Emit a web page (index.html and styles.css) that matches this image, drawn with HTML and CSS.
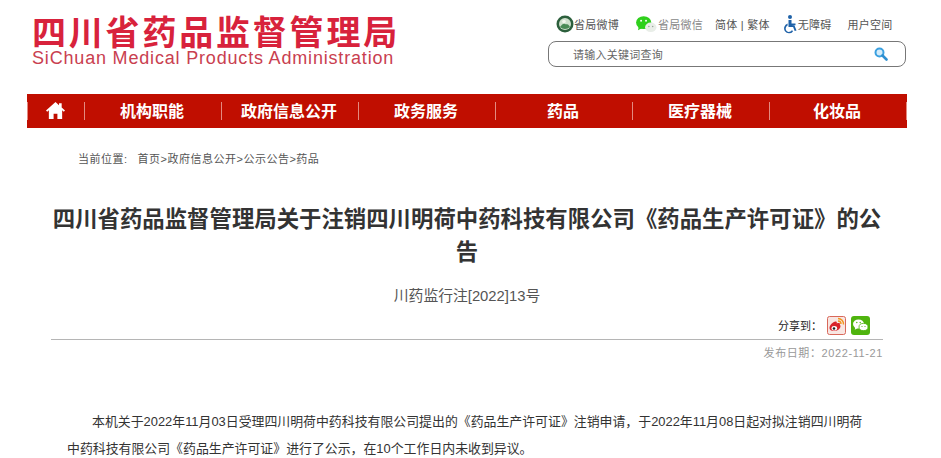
FILE: index.html
```html
<!DOCTYPE html>
<html lang="zh-CN">
<head>
    <meta charset="UTF-8">
    <title>四川省药品监督管理局</title>
    <link rel="stylesheet" href="styles.css">
</head>
<body>
    <header class="top">
        <div class="logo">
            <div class="logo-cn">四川省药品监督管理局</div>
            <div class="logo-en">SiChuan Medical Products Administration</div>
        </div>
        <div class="top-right">
            <div class="links">
                <a class="link link-weibo">
                    <svg width="18" height="18" viewBox="0 0 18 18"><circle cx="9" cy="9" r="8.5" fill="#2c5f3c"/><circle cx="9" cy="9" r="6" fill="#cfe0cc"/><path d="M4 12c2-3 4-4 5-3s3-1 5 3a7 7 0 0 1-10 0z" fill="#4a8a55"/><circle cx="8" cy="6.500" r="1.800" fill="#f4f6ee"/></svg>
                    省局微博
                </a>
                <a class="link link-wechat">
                    <svg width="23" height="19" viewBox="0 0 24 20"><ellipse cx="9" cy="8" rx="8" ry="6.800" fill="#2fd01c"/><path d="M4 12l-1 4 5-2.500z" fill="#2fd01c"/><circle cx="6.300" cy="6" r="1" fill="#fff"/><circle cx="11.500" cy="6" r="1" fill="#fff"/><ellipse cx="16.500" cy="13" rx="6" ry="5" fill="#e9eee8"/><circle cx="14.500" cy="12" r=".8" fill="#9aa39a"/><circle cx="18.500" cy="12" r=".8" fill="#9aa39a"/></svg>
                    省局微信
                </a>
                <a class="link link-lang">简体 | 繁体</a>
                <a class="link link-access">
                    <svg width="14" height="19" viewBox="0 0 14 19"><circle cx="6" cy="2" r="2" fill="#1f62a8"/><path d="M4.500 5h3v3.500h4v1.800H7.500l3 .1 2 5-1.800.7-1.600-4H4.500z" fill="#1f62a8"/><path d="M3.600 8.600v2A3.300 3.300 0 1 0 8 15l1 1.500A5 5 0 1 1 3.600 8.600z" fill="#1f62a8"/></svg>
                    无障碍
                </a>
                <a class="link link-user">用户空间</a>
            </div>
            <div class="search">
                <span class="search-text">请输入关键词查询</span>
                <svg width="14" height="14" viewBox="0 0 14 14"><circle cx="5.500" cy="5.500" r="4" fill="#d5ecfa" stroke="#3aa0e0" stroke-width="2"/><path d="M8.500 8.500l4 4" stroke="#2f8fd0" stroke-width="2.600" stroke-linecap="round"/></svg>
            </div>
        </div>
    </header>

    <nav class="nav">
        <a class="nav-item nav-home">
            <svg width="19" height="17" viewBox="0 0 20 19" preserveAspectRatio="none"><path d="M10 0L0 9.500l1.300 1.400L3 9.300V19h5v-6h4v6h5V9.300l1.700 1.600L20 9.500 16.500 6.200V1.500h-2.800v2z" fill="#fff"/></svg>
        </a>
        <a class="nav-item">机构职能</a>
        <a class="nav-item">政府信息公开</a>
        <a class="nav-item">政务服务</a>
        <a class="nav-item">药品</a>
        <a class="nav-item">医疗器械</a>
        <a class="nav-item">化妆品</a>
    </nav>

    <div class="crumbs"><span class="crumbs-label">当前位置:</span>首页&gt;政府信息公开&gt;公示公告&gt;药品</div>

    <main class="article">
        <h1 class="title">四川省药品监督管理局关于注销四川明荷中药科技有限公司《药品生产许可证》的公告</h1>
        <div class="doc-no">川药监行注[2022]13号</div>
        <div class="share">
            <span>分享到：</span>
            <svg class="share-icon" width="19" height="19" viewBox="0 0 19 19"><rect x=".5" y=".5" width="18" height="18" rx="2" fill="#f8e6e2" stroke="#d9685a"/><path d="M2.500 12c0-3 3.500-6 6-6.500 1.500-.3 1.500 1 1.200 2 2-.8 3.800-.5 3.200 1.500 1.200.5 1.100 5-5 6-3 .4-5.400-.8-5.400-3z" fill="#d8232a"/><ellipse cx="7.300" cy="12.300" rx="2.800" ry="2.300" fill="#fff"/><circle cx="7" cy="12.500" r="1.300" fill="#222"/><path d="M11 2.500a5.500 5.500 0 0 1 5.500 6M11 5a3 3 0 0 1 3 3" fill="none" stroke="#f2961e" stroke-width="1.400"/></svg>
            <svg class="share-icon" width="19" height="19" viewBox="0 0 19 19"><rect width="19" height="19" rx="3" fill="#4fb40e"/><ellipse cx="7.500" cy="8" rx="5.500" ry="4.500" fill="#fff"/><path d="M4.500 11l-.8 2.800 3.300-1.800z" fill="#fff"/><ellipse cx="12.500" cy="11" rx="4.500" ry="3.600" fill="#fff" stroke="#4fb40e" stroke-width=".8"/><circle cx="5.800" cy="6.500" r=".7" fill="#4fb40e"/><circle cx="9.200" cy="6.500" r=".7" fill="#4fb40e"/><circle cx="11" cy="10.500" r=".6" fill="#4fb40e"/><circle cx="14" cy="10.500" r=".6" fill="#4fb40e"/></svg>
        </div>
        <div class="date">发布日期：2022-11-21</div>
        <div class="content">
            <p>本机关于2022年11月03日受理四川明荷中药科技有限公司提出的《药品生产许可证》注销申请，于2022年11月08日起对拟注销四川明荷中药科技有限公司《药品生产许可证》进行了公示，在10个工作日内未收到异议。</p>
        </div>
    </main>
</body>
</html>
```

FILE: styles.css
```css
body {
    margin: 0;
    background-color: #fff;
    color: #333;
    font-family: "Liberation Sans", "Noto Sans CJK SC", sans-serif;
}
.top {
    width: 879px;
    height: 94px;
    margin-left: 27px;
    display: flex;
    justify-content: space-between;
}
.logo {
    padding: 18px 0 0 5px;
    color: #d8223c;
}
.logo-cn {
    font-size: 34px;
    font-weight: bold;
    line-height: 31px;
    letter-spacing: 2.8px;
    white-space: nowrap;
}
.logo-en {
    font-size: 18px;
    line-height: 18px;
    letter-spacing: .82px;
    color: #c9404f;
    white-space: nowrap;
}
.top-right {
    width: 358px;
    padding-top: 13px;
}
.links {
    height: 22px;
    display: flex;
    align-items: center;
    font-size: 11px;
    letter-spacing: .25px;
    color: #555;
}
.link {
    display: flex;
    align-items: center;
    white-space: nowrap;
}
.link-weibo { margin-left: 8px; }
.link-wechat { margin-left: 16px; color: #888; }
.link-lang { margin-left: 12px; }
.link-access { margin-left: 14px; }
.link-user { margin-left: 16px; }
.search {
    box-sizing: border-box;
    height: 26px;
    margin-top: 6px;
    padding: 0 17px 0 24px;
    border: 1px solid #777;
    border-radius: 8px;
    display: flex;
    align-items: center;
    justify-content: space-between;
    font-size: 11px;
    letter-spacing: .25px;
    color: #666;
}
.nav {
    width: 880px;
    height: 34px;
    margin-left: 27px;
    background-color: #c00e00;
    display: grid;
    grid-template-columns: 58px repeat(6, 137px);
    align-items: center;
}
.nav-item {
    box-sizing: border-box;
    height: 18px;
    padding: 0 2px 2px 0;
    border-right: 1px solid #e38a80;
    display: flex;
    align-items: center;
    justify-content: center;
    color: #fff;
    font-size: 16px;
    font-weight: bold;
}
.nav-home { border-left: 1px solid #e38a80; }
.crumbs {
    margin: 23px 0 0 78px;
    font-size: 11px;
    line-height: 16px;
    letter-spacing: .5px;
    color: #555;
}
.crumbs-label { margin-right: 10px; }
.article {
    width: 832px;
    margin-left: 51px;
}
.title {
    margin: 36px 0 0;
    font-size: 22.4px;
    line-height: 33px;
    font-weight: bold;
    text-align: center;
    color: #333;
}
.doc-no {
    margin-top: 17px;
    font-size: 14.8px;
    line-height: 20px;
    text-align: center;
    color: #555;
}
.share {
    height: 20px;
    margin-top: 9px;
    padding-right: 13px;
    display: flex;
    justify-content: flex-end;
    align-items: center;
    gap: 5px;
    font-size: 11px;
    color: #222;
}
.date {
    margin-top: 4px;
    padding-top: 5px;
    border-top: 1px solid #b5b5b5;
    font-size: 11px;
    line-height: 16px;
    text-align: right;
    color: #999;
    letter-spacing: .6px;
}
.content {
    width: 805px;
    margin: 47px 0 0 16px;
    font-size: 12.9px;
    line-height: 27px;
    color: #333;
}
.content p {
    margin: 0;
    text-indent: 25px;
}
```
